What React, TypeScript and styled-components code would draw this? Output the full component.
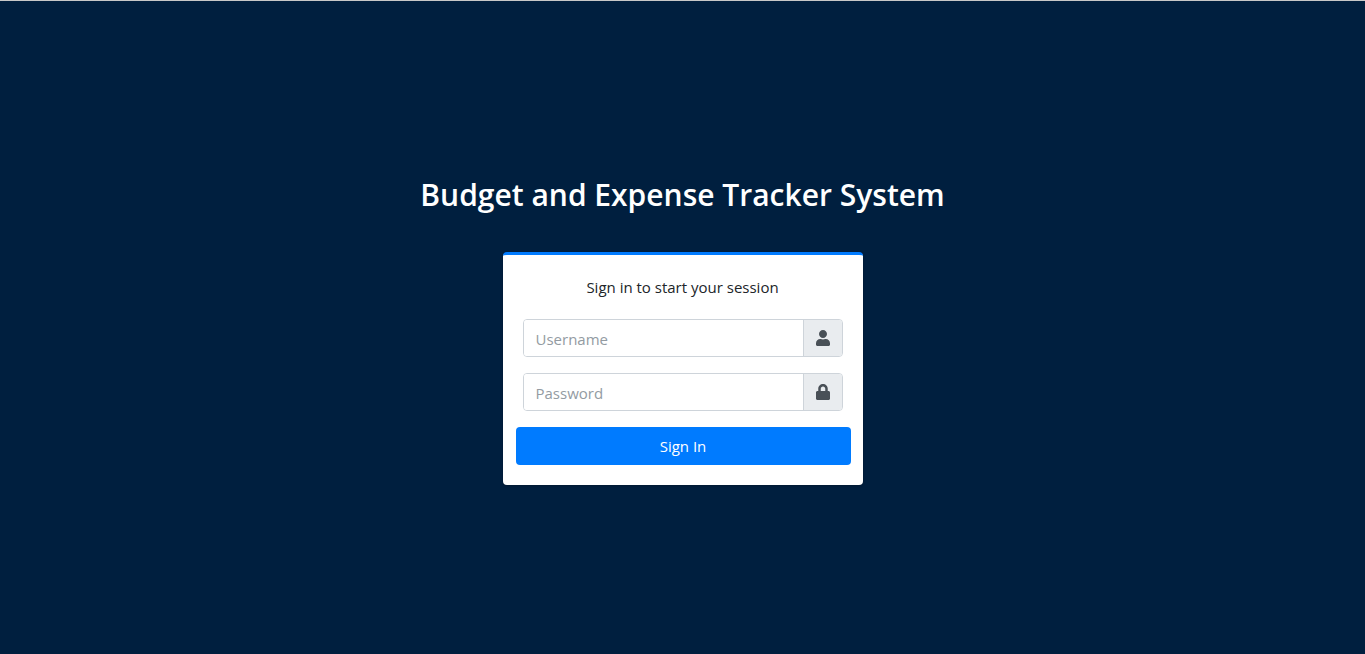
import React from "react";
import styled, { createGlobalStyle } from "styled-components";
import { FaLock, FaUser } from "react-icons/fa";

const GlobalStyle = createGlobalStyle`
  *, *::before, *::after { box-sizing: border-box; }
  body {
    margin: 0;
    background: #001f3f;
    color: #212529;
    font-family: "Segoe UI", "Open Sans", "Noto Sans", sans-serif;
    font-size: 15px;
    line-height: 24px;
  }
`;

const Page = styled.main`
  display: flex;
  flex-direction: column;
  align-items: center;
  justify-content: center;
  gap: 38px;
  min-height: 100vh;
  padding-top: 6px;
  border-top: 1px solid #c8c8c8;
`;

const Title = styled.h1`
  margin: 0;
  color: #fff;
  font-size: 30px;
  font-weight: 600;
  line-height: 38px;
  text-align: center;
`;

const Card = styled.section`
  width: 360px;
  max-width: 90%;
  padding: 20px;
  background: #fff;
  border-top: 3px solid #007bff;
  border-radius: 4px;
  box-shadow: 0 0 1px rgba(0, 0, 0, 0.13), 0 1px 3px rgba(0, 0, 0, 0.2);
`;

const Message = styled.p`
  margin: 0 0 20px;
  text-align: center;
`;

const Form = styled.form`
  display: flex;
  flex-direction: column;
  gap: 16px;
`;

const InputGroup = styled.div`
  display: flex;
  height: 38px;
  border: 1px solid #ced4da;
  border-radius: 4px;
  overflow: hidden;
`;

const Input = styled.input`
  flex: 1;
  min-width: 0;
  padding: 2px 12px 0;
  border: 0;
  outline: 0;
  background: #fff;
  color: #495057;
  font: inherit;

  &::placeholder {
    color: #939ba2;
    opacity: 1;
  }
`;

const Addon = styled.label`
  display: flex;
  align-items: center;
  justify-content: center;
  width: 39px;
  border-left: 1px solid #ced4da;
  background: #e9ecef;
  color: #495057;
  font-size: 16px;
`;

const SubmitButton = styled.button`
  height: 38px;
  margin: 0 -8px 0 -7px;
  border: 0;
  border-radius: 4px;
  background: #007bff;
  color: #fff;
  font: inherit;
  cursor: pointer;
`;

export default function App() {
  return (
    <>
      <GlobalStyle />
      <Page>
        <Title>Budget and Expense Tracker System</Title>
        <Card>
          <Message>Sign in to start your session</Message>
          <Form onSubmit={(event: React.FormEvent) => event.preventDefault()}>
            <InputGroup>
              <Input id="username" type="text" placeholder="Username" />
              <Addon htmlFor="username" aria-label="Username">
                <FaUser />
              </Addon>
            </InputGroup>
            <InputGroup>
              <Input id="password" type="password" placeholder="Password" />
              <Addon htmlFor="password" aria-label="Password">
                <FaLock />
              </Addon>
            </InputGroup>
            <SubmitButton type="submit">Sign In</SubmitButton>
          </Form>
        </Card>
      </Page>
    </>
  );
}
